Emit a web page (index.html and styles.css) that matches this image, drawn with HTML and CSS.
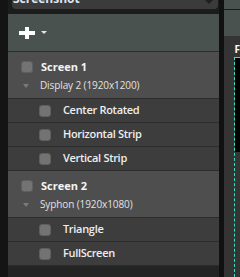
FILE: index.html
```html
<!DOCTYPE html>
<html lang="en">
<head>
  <meta charset="UTF-8">
  <title>Screens</title>
  <link rel="stylesheet" href="styles.css">
</head>
<body>
  <div class="app">
    <div class="gutter"></div>

    <div class="panel">
      <div class="header">
        <div class="dropdown">
          <span class="dropdown-label">Screenshot</span>
          <span class="dropdown-caret"></span>
        </div>
      </div>

      <div class="toolbar">
        <span class="plus"></span>
        <span class="caret-small"></span>
      </div>

      <div class="list">
        <div class="group">
          <div class="group-title">
            <span class="check"></span>
            <span class="group-name">Screen 1</span>
          </div>
          <div class="group-sub">
            <span class="disclosure"></span>
            <span class="group-output">Display 2 (1920x1200)</span>
          </div>
        </div>
        <div class="row"><span class="check"></span><span class="row-name">Center Rotated</span></div>
        <div class="row"><span class="check"></span><span class="row-name">Horizontal Strip</span></div>
        <div class="row"><span class="check"></span><span class="row-name">Vertical Strip</span></div>

        <div class="group">
          <div class="group-title">
            <span class="check"></span>
            <span class="group-name">Screen 2</span>
          </div>
          <div class="group-sub">
            <span class="disclosure"></span>
            <span class="group-output">Syphon (1920x1080)</span>
          </div>
        </div>
        <div class="row"><span class="check"></span><span class="row-name">Triangle</span></div>
        <div class="row"><span class="check"></span><span class="row-name">FullScreen</span></div>

        <div class="list-empty"></div>
      </div>
    </div>

    <div class="divider"></div>

    <div class="side">
      <div class="side-top"></div>
      <div class="side-toolbar"></div>
      <div class="side-body">
        <div class="side-title">F</div>
        <div class="stage">
          <div class="stage-fill"></div>
        </div>
      </div>
    </div>
  </div>
</body>
</html>
```

FILE: styles.css
```css
* {
  box-sizing: border-box;
  margin: 0;
  padding: 0;
}

body {
  font-family: 'Open Sans', 'DejaVu Sans', sans-serif;
  background: #141414;
  width: 240px;
  height: 277px;
  overflow: hidden;
}

.app {
  display: flex;
  height: 277px;
}

.gutter {
  width: 8px;
  background: #141414;
}

.panel {
  width: 212px;
  display: flex;
  flex-direction: column;
}

/* top preset dropdown */
.header {
  height: 14px;
  background: #1c1c1c;
  padding: 0 1px 0 4px;
}

.dropdown {
  height: 9px;
  background: #3b3b3b;
  border-radius: 0 0 4px 4px;
  overflow: hidden;
  display: flex;
  justify-content: space-between;
  padding: 0 5px 0 1px;
}

.dropdown-label {
  margin-top: -9px;
  font-size: 12px;
  line-height: 16px;
  font-weight: 700;
  color: #dfe6f2;
}

.dropdown-caret {
  width: 0;
  height: 0;
  border-left: 4px solid transparent;
  border-right: 4px solid transparent;
  border-top: 4px solid #1f1f1f;
}

.toolbar {
  height: 37px;
  background: #4a524f;
  display: flex;
  align-items: center;
  padding-left: 11px;
}

.plus {
  position: relative;
  width: 16px;
  height: 12px;
  margin-top: 1px;
}

.plus::before,
.plus::after {
  content: '';
  position: absolute;
  background: #ffffff;
}

.plus::before {
  left: 0;
  top: 4px;
  width: 16px;
  height: 4px;
}

.plus::after {
  left: 6px;
  top: 0;
  width: 4px;
  height: 12px;
}

.caret-small {
  margin-left: 6px;
  width: 0;
  height: 0;
  border-left: 3px solid transparent;
  border-right: 3px solid transparent;
  border-top: 3px solid #e6e6e6;
}

/* screen list */
.list {
  flex: 1;
  display: flex;
  flex-direction: column;
}

.check {
  width: 12px;
  height: 12px;
  border-radius: 3px;
  background: #737373;
  border: 1px solid #5f5f5f;
  flex-shrink: 0;
}

.group {
  border-top: 1px solid #2c2c2c;
  background: #4e4e4e;
  height: 47px;
  padding: 8px 0 0 13px;
}

.group-title {
  display: flex;
  align-items: center;
  height: 14px;
}

.group-name {
  margin-left: 8px;
  font-size: 11px;
  line-height: 14px;
  font-weight: 700;
  color: #f4f4f4;
}

.group-sub {
  display: flex;
  align-items: center;
  height: 14px;
  margin-top: 4px;
  padding-left: 2px;
}

.disclosure {
  width: 0;
  height: 0;
  border-left: 3.5px solid transparent;
  border-right: 3.5px solid transparent;
  border-top: 4px solid #7a7a7a;
  margin-top: 1px;
}

.group-output {
  margin-left: 11px;
  font-size: 10px;
  line-height: 14px;
  letter-spacing: -0.1px;
  color: #e2e2e2;
}

.row {
  border-top: 1px solid #2c2c2c;
  background: #3d3d3d;
  height: 24px;
  display: flex;
  align-items: center;
  padding-left: 31px;
}

.row-name {
  margin-left: 12px;
  margin-bottom: 2px;
  font-size: 11px;
  line-height: 14px;
  font-weight: 600;
  letter-spacing: -0.3px;
  color: #eeeeee;
}

.list-empty {
  flex: 1;
  border-top: 1px solid #2c2c2c;
  background: #242424;
}

.divider {
  width: 5px;
  background: #111111;
}

/* right hand preview panel */
.side {
  flex: 1;
  display: flex;
  flex-direction: column;
}

.side-top {
  height: 14px;
  background: #4a524f;
  border-bottom: 1px solid #1c1c1c;
}

.side-toolbar {
  height: 36px;
  background: #4a524f;
}

.side-body {
  flex: 1;
  background: #343434;
  padding: 6px 0 0 10px;
}

.side-title {
  margin-left: 1px;
  font-size: 10px;
  line-height: 14px;
  font-weight: 700;
  color: #ffffff;
}

.stage {
  margin-top: 1px;
  height: 220px;
  border-left: 1px dashed #38e0c2;
  border-top: 1px dashed #38e0c2;
}

.stage-fill {
  height: 94px;
  background: #000000;
}
```
